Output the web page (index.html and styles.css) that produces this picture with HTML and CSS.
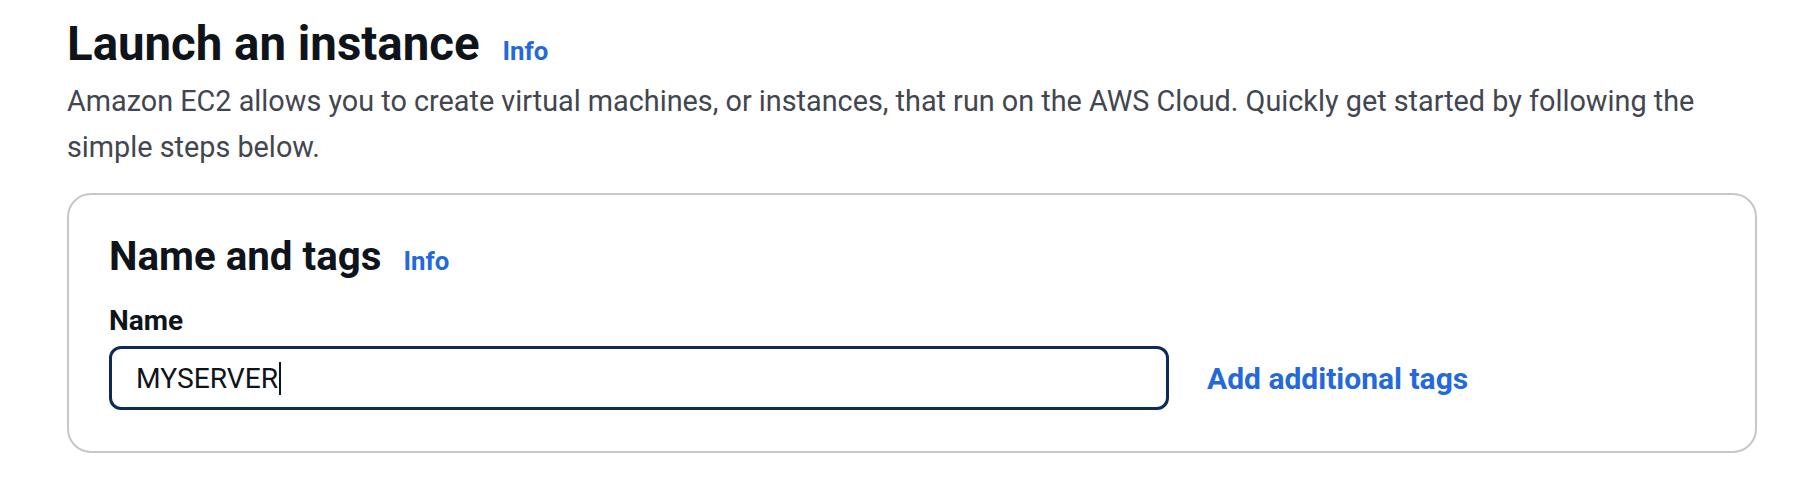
FILE: index.html
```html
<!DOCTYPE html>
<html lang="en">
<head>
<meta charset="utf-8">
<title>Launch an instance</title>
<link rel="stylesheet" href="styles.css">
</head>
<body>
<main class="page">
  <header class="page-header">
    <h1 class="title">Launch an instance <a class="info" href="#">Info</a></h1>
    <p class="desc">Amazon EC2 allows you to create virtual machines, or instances, that run on the AWS Cloud. Quickly get started by following the simple steps below.</p>
  </header>
  <section class="card">
    <h2 class="card-title">Name and tags <a class="info" href="#">Info</a></h2>
    <label class="label" for="name">Name</label>
    <div class="row">
      <div class="input" id="name"><span class="value">MYSERVER</span><span class="caret"></span></div>
      <a class="link" href="#">Add additional tags</a>
    </div>
  </section>
</main>
</body>
</html>
```
FILE: styles.css
```css
* { box-sizing: border-box; }
html, body { margin: 0; background: #ffffff; }
body { font-family: Roboto, "Open Sans", sans-serif; color: #0f141a; }

.page { padding: 19px 0 0 67px; width: 1757px; }

.page-header { display: flex; flex-direction: column; }

.title {
  margin: 0;
  display: flex;
  align-items: baseline;
  gap: 23px;
  font-size: 47.4px;
  line-height: 50px;
  font-weight: 700;
  color: #0f141a;
}

.info {
  font-size: 25.8px;
  font-weight: 700;
  color: #2469db;
  text-decoration: none;
}

.desc {
  margin: 2px 0 0;
  font-size: 28.8px;
  line-height: 46px;
  color: #424650;
}

.card {
  margin-top: 23px;
  border: 2px solid #c6c6cd;
  border-radius: 24px;
  padding: 38px 40px 41px;
  display: flex;
  flex-direction: column;
}

.card-title {
  margin: 0;
  display: flex;
  align-items: baseline;
  gap: 22px;
  font-size: 40.3px;
  line-height: 48px;
  font-weight: 700;
  color: #0f141a;
}

.label {
  margin-top: 18px;
  font-size: 28px;
  line-height: 36px;
  font-weight: 700;
  color: #0f141a;
}

.row {
  margin-top: 7px;
  display: flex;
  align-items: center;
  gap: 38px;
}

.input {
  width: 1060px;
  height: 64px;
  border: 3px solid #0d2a5c;
  border-radius: 12px;
  padding: 0 24px;
  display: flex;
  align-items: center;
  font-size: 28.2px;
  color: #0f141a;
}

.caret {
  display: inline-block;
  width: 2px;
  height: 33px;
  background: #0f141a;
  margin-left: 1px;
}

.link {
  font-size: 30px;
  font-weight: 700;
  color: #2469db;
  text-decoration: none;
}
```
